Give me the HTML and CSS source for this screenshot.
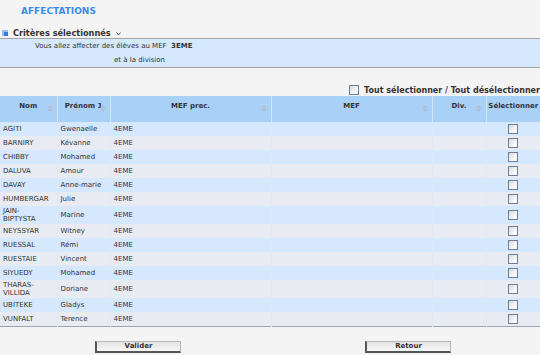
FILE: index.html
```html
<!DOCTYPE html>
<html lang="fr">
<head>
<meta charset="UTF-8"/>
<title>Affectations</title>
<link rel="stylesheet" href="styles.css">
</head>
<body>
<div class="page">
  <h1 class="page-title">AFFECTATIONS</h1>

  <div class="criteria-head">
    <span class="criteria-icon"></span>
    <span>Critères sélectionnés</span>
    <svg class="chevron" width="5" height="4" viewBox="0 0 5 4"><path d="M0.5 0.5 L2.5 3 L4.5 0.5" fill="none" stroke="#555" stroke-width="1"/></svg>
  </div>
  <div class="criteria-box">
    <p class="criteria-line">Vous allez affecter des élèves au MEF&nbsp; <b>3EME</b></p>
    <p class="criteria-line second">et à la division</p>
  </div>

  <div class="select-all">
    <span class="check"></span>
    <span>Tout sélectionner / Tout désélectionner</span>
  </div>

  <table class="grid">
    <colgroup>
      <col style="width:57px"><col style="width:53px"><col style="width:161px">
      <col style="width:161px"><col style="width:54px"><col>
    </colgroup>
    <thead>
      <tr>
        <th class="sortable">Nom</th>
        <th class="sortable">Prénom 1</th>
        <th class="sortable">MEF prec.</th>
        <th class="sortable">MEF</th>
        <th class="sortable">Div.</th>
        <th>Sélectionner</th>
      </tr>
    </thead>
    <tbody id="rows"></tbody>
  </table>

  <div class="actions">
    <button class="btn">Valider</button>
    <button class="btn">Retour</button>
  </div>
</div>
<script>
(() => {
  const eleves = [
    ['AGITI', 'Gwenaelle'],
    ['BARNIRY', 'Kévanne'],
    ['CHIBBY', 'Mohamed'],
    ['DALUVA', 'Amour'],
    ['DAVAY', 'Anne-marie'],
    ['HUMBERGAR', 'Julie'],
    ['JAIN-<br>BIPTYSTA', 'Marine'],
    ['NEYSSYAR', 'Witney'],
    ['RUESSAL', 'Rémi'],
    ['RUESTAIE', 'Vincent'],
    ['SIYUEDY', 'Mohamed'],
    ['THARAS-<br>VILLIDA', 'Doriane'],
    ['UBITEKE', 'Gladys'],
    ['VUNFALT', 'Terence'],
  ];
  const tbody = document.getElementById('rows');
  tbody.innerHTML = eleves.map(([nom, prenom]) =>
    '<tr><td>' + nom + '</td><td>' + prenom + '</td><td>4EME</td><td></td><td></td>' +
    '<td class="sel"><span class="check"></span></td></tr>'
  ).join('');
})();
</script>
</body>
</html>
```

FILE: styles.css
```css
/* Base */
* {
  box-sizing: border-box;
}
html, body {
  margin: 0;
  padding: 0;
  background: #f5f4f4;
  font-family: 'DejaVu Sans', Verdana, sans-serif;
  font-size: 8px;
  color: #333;
}
.page {
  width: 540px;
}
.page-title {
  margin: 0;
  padding: 6px 0 0 21px;
  height: 27px;
  font-size: 9px;
  font-weight: bold;
  color: #3b8de6;
}
.criteria-head {
  display: flex;
  align-items: center;
  gap: 5px;
  padding-left: 2px;
  height: 11px;
  font-size: 8.2px;
  font-weight: bold;
  color: #333;
}
.criteria-icon {
  width: 6px;
  height: 6px;
  background: #2f7fe0;
  border-top: 2px solid #8fc0f5;
  border-left: 2px solid #8fc0f5;
}
.chevron {
  margin-left: 0;
  margin-top: 2px;
}
.criteria-box {
  background: #d5e8fd;
  border-top: 1px solid #a3a3a3;
  border-bottom: 1px solid #a3a3a3;
  height: 30px;
  padding-top: 3px;
}
.criteria-line {
  margin: 0;
  padding-left: 35px;
  height: 14px;
  line-height: 9px;
  font-size: 7px;
  color: #333;
}
.criteria-line b {
  font-weight: bold;
}
.criteria-line.second {
  padding-left: 114px;
}
.select-all {
  display: flex;
  justify-content: flex-end;
  align-items: center;
  gap: 5px;
  margin-top: 16px;
  height: 12px;
  font-size: 8px;
  font-weight: bold;
  color: #333;
}
.check {
  display: inline-block;
  width: 10px;
  height: 10px;
  border: 1px solid #6a7f99;
  background: linear-gradient(135deg, #d9d9d9, #fafafa 70%);
}
/* Table */
.grid {
  width: 540px;
  margin-top: 0;
  border-collapse: collapse;
  table-layout: fixed;
  border-bottom: 1px solid #9aa4b0;
}
.grid th {
  background: #a9d0f6;
  height: 26px;
  padding: 6px 0 0;
  vertical-align: top;
  font-size: 7px;
  font-weight: bold;
  color: #333;
  text-align: center;
  border-left: 1px solid #d3e6fa;
  position: relative;
}
.grid th:first-child {
  border-left: none;
}
.grid th.sortable::after {
  content: '';
  position: absolute;
  right: 4px;
  top: 9px;
  width: 0;
  height: 0;
  border-left: 3px solid transparent;
  border-right: 3px solid transparent;
  border-bottom: 3px solid #b0c0d2;
}
.grid th.sortable::before {
  content: '';
  position: absolute;
  right: 4px;
  top: 13px;
  width: 0;
  height: 0;
  border-left: 3px solid transparent;
  border-right: 3px solid transparent;
  border-top: 3px solid #b0c0d2;
}
.grid td {
  padding: 1px 3px;
  line-height: 8px;
  font-size: 7px;
  color: #333;
  vertical-align: middle;
  border-left: 1px solid #dde9f6;
}
.grid td:first-child {
  border-left: none;
}
.grid tbody tr:nth-child(odd) td {
  background: #d5e8fd;
}
.grid tbody tr:nth-child(even) td {
  background: #e8ecf2;
}
.grid td.sel {
  text-align: center;
  padding: 2px 0;
  height: 14px;
}
.grid td.sel .check {
  vertical-align: middle;
}
/* Buttons */
.actions {
  display: flex;
  justify-content: space-between;
  padding: 14px 89px 0 95px;
}
.btn {
  width: 86px;
  height: 12px;
  padding: 0;
  font-family: 'DejaVu Sans', Verdana, sans-serif;
  font-size: 7px;
  font-weight: bold;
  color: #333;
  background: linear-gradient(#e2e2e2, #f8f8f8);
  border: 1px solid #b8b8b8;
  border-left: 2px solid #555;
  border-bottom: 2px solid #555;
  border-radius: 0;
  line-height: 9px;
}
```
